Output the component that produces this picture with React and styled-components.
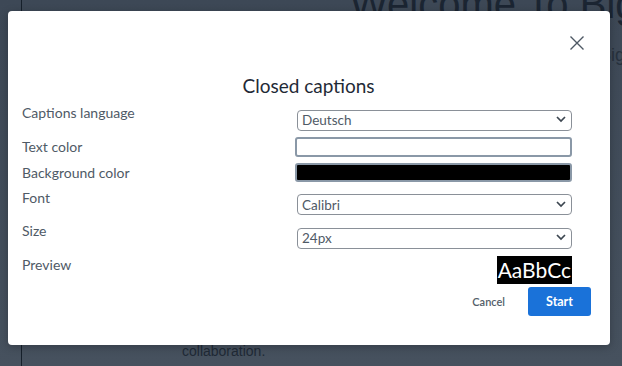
import React from 'react';
import styled, { createGlobalStyle } from 'styled-components';

const GlobalStyle = createGlobalStyle`
  html, body {
    margin: 0;
    padding: 0;
    width: 622px;
    height: 366px;
    overflow: hidden;
    background: #434e5b;
    font-family: Lato, "Noto Sans", sans-serif;
  }
`;

const Page = styled.div`
  position: relative;
  display: flex;
  width: 622px;
  height: 366px;
  background: linear-gradient(180deg, #3d4856 0%, #46515e 100%);
  overflow: hidden;
`;

const Sidebar = styled.div`
  width: 21px;
  flex-shrink: 0;
  border-right: 1px solid #16202b;
`;

const Main = styled.main`
  flex: 1;
  display: flex;
  flex-direction: column;
  padding-left: 160px;
`;

const Heading = styled.h1`
  margin: -18px 0 0 168px;
  font-family: "Liberation Sans", Arial, sans-serif;
  font-weight: 400;
  font-size: 40px;
  white-space: nowrap;
  color: #1b2532;
`;

const Sub = styled.p`
  margin: 18px -14px 0 0;
  font-family: "Liberation Sans", Arial, sans-serif;
  font-size: 18px;
  color: #27313d;
  white-space: nowrap;
  text-align: right;
`;

const Footer = styled.p`
  margin: auto 0 7px 0;
  font-family: "Liberation Sans", Arial, sans-serif;
  font-size: 14px;
  color: #202a36;
`;

const Rail = styled.div`
  display: flex;
  flex-direction: column;
  gap: 68px;
  padding-top: 175px;
  margin-right: -28px;
  width: 42px;
`;

const RoundButton = styled.div`
  width: 42px;
  height: 42px;
  border-radius: 50%;
  background: #0c3a66;
`;

const Modal = styled.div`
  position: absolute;
  left: 8px;
  top: 11px;
  width: 602px;
  height: 334px;
  box-sizing: border-box;
  background: #fff;
  border-radius: 4px;
  box-shadow: 0 2px 8px rgba(0, 0, 0, 0.25);
  display: flex;
  flex-direction: column;
  padding: 21px 19px 0 14px;
`;

const Header = styled.div`
  display: flex;
  justify-content: flex-end;
  height: 22px;
  padding-right: 3px;
`;

const CloseButton = styled.button`
  width: 22px;
  height: 22px;
  padding: 0;
  border: none;
  background: none;
  display: flex;
  align-items: center;
  justify-content: center;
  cursor: pointer;
`;

const Title = styled.h2`
  margin: 19px 0 4px 0;
  text-align: center;
  font-size: 19px;
  font-weight: 400;
  color: #1f2a36;
  line-height: 26px;
  padding-left: 4px;
`;

const Form = styled.div`
  display: flex;
  flex-direction: column;
  gap: 6px;
  padding-right: 19px;
`;

const Row = styled.div`
  display: flex;
  align-items: flex-start;
`;

const Label = styled.label`
  width: 275px;
  flex-shrink: 0;
  font-size: 14px;
  line-height: 19px;
  color: #4f5a66;
`;

const SelectWrap = styled.div`
  position: relative;
  flex: 1;
  margin-top: 6px;
`;

const Select = styled.select`
  appearance: none;
  width: 100%;
  height: 21px;
  box-sizing: border-box;
  border: 1px solid #8a9098;
  border-radius: 4px;
  background: #fff;
  padding: 0 20px 0 4px;
  font-family: inherit;
  font-size: 13.5px;
  color: #4f5a66;
`;

const Chevron = styled.svg`
  position: absolute;
  right: 6px;
  top: 6px;
  pointer-events: none;
`;

const Swatch = styled.div`
  flex: 1;
  margin-left: -2px;
  height: ${(p) => p.$height}px;
  box-sizing: border-box;
  border: 2px solid #8a98a7;
  border-radius: 3px;
  background: ${(p) => p.$color};
`;

const PreviewCell = styled.div`
  flex: 1;
  display: flex;
  justify-content: flex-end;
  margin-top: 1px;
`;

const PreviewText = styled.span`
  background: #000;
  color: #fff;
  font-family: Lato, sans-serif;
  font-size: 21px;
  line-height: 28px;
  padding: 0 1px;
`;

const Actions = styled.div`
  display: flex;
  justify-content: flex-end;
  align-items: center;
  gap: 23px;
  margin-top: 3px;
`;

const CancelButton = styled.button`
  border: none;
  background: none;
  padding: 0;
  font-family: inherit;
  font-size: 11px;
  font-weight: 600;
  color: #535e6a;
  cursor: pointer;
`;

const StartButton = styled.button`
  width: 63px;
  height: 29px;
  border: none;
  border-radius: 3px;
  background: #1a72d9;
  color: #fff;
  font-family: inherit;
  font-size: 12.5px;
  font-weight: 700;
  cursor: pointer;
`;

const SelectField = ({ value }) => (
  <SelectWrap>
    <Select defaultValue={value}>
      <option>{value}</option>
    </Select>
    <Chevron width="10" height="8" viewBox="0 0 10 8">
      <path d="M1 2 L5 6 L9 2" fill="none" stroke="#3c4650" strokeWidth="1.7" />
    </Chevron>
  </SelectWrap>
);

const App = () => (
  <>
    <GlobalStyle />
    <Page>
      <Sidebar />
      <Main>
        <Heading>Welcome To BigBlueButton</Heading>
        <Sub>Sign in to get started and log in</Sub>
        <Footer>collaboration.</Footer>
      </Main>
      <Rail>
        <RoundButton />
        <RoundButton />
      </Rail>
      <Modal>
        <Header>
          <CloseButton aria-label="Close">
            <svg width="16" height="16" viewBox="0 0 16 16">
              <path d="M1.5 1.5 L14.5 14.5 M14.5 1.5 L1.5 14.5" stroke="#4e5864" strokeWidth="1.4" />
            </svg>
          </CloseButton>
        </Header>
        <Title>Closed captions</Title>
        <Form>
          <Row>
            <Label>Captions language</Label>
            <SelectField value="Deutsch" />
          </Row>
          <Row>
            <Label>Text color</Label>
            <Swatch $color="#fff" $height={20} />
          </Row>
          <Row>
            <Label>Background color</Label>
            <Swatch $color="#000" $height={19} />
          </Row>
          <Row>
            <Label>Font</Label>
            <SelectField value="Calibri" />
          </Row>
          <Row>
            <Label>Size</Label>
            <SelectField value="24px" />
          </Row>
          <Row>
            <Label>Preview</Label>
            <PreviewCell>
              <PreviewText>AaBbCc</PreviewText>
            </PreviewCell>
          </Row>
        </Form>
        <Actions>
          <CancelButton>Cancel</CancelButton>
          <StartButton>Start</StartButton>
        </Actions>
      </Modal>
    </Page>
  </>
);

export default App;
